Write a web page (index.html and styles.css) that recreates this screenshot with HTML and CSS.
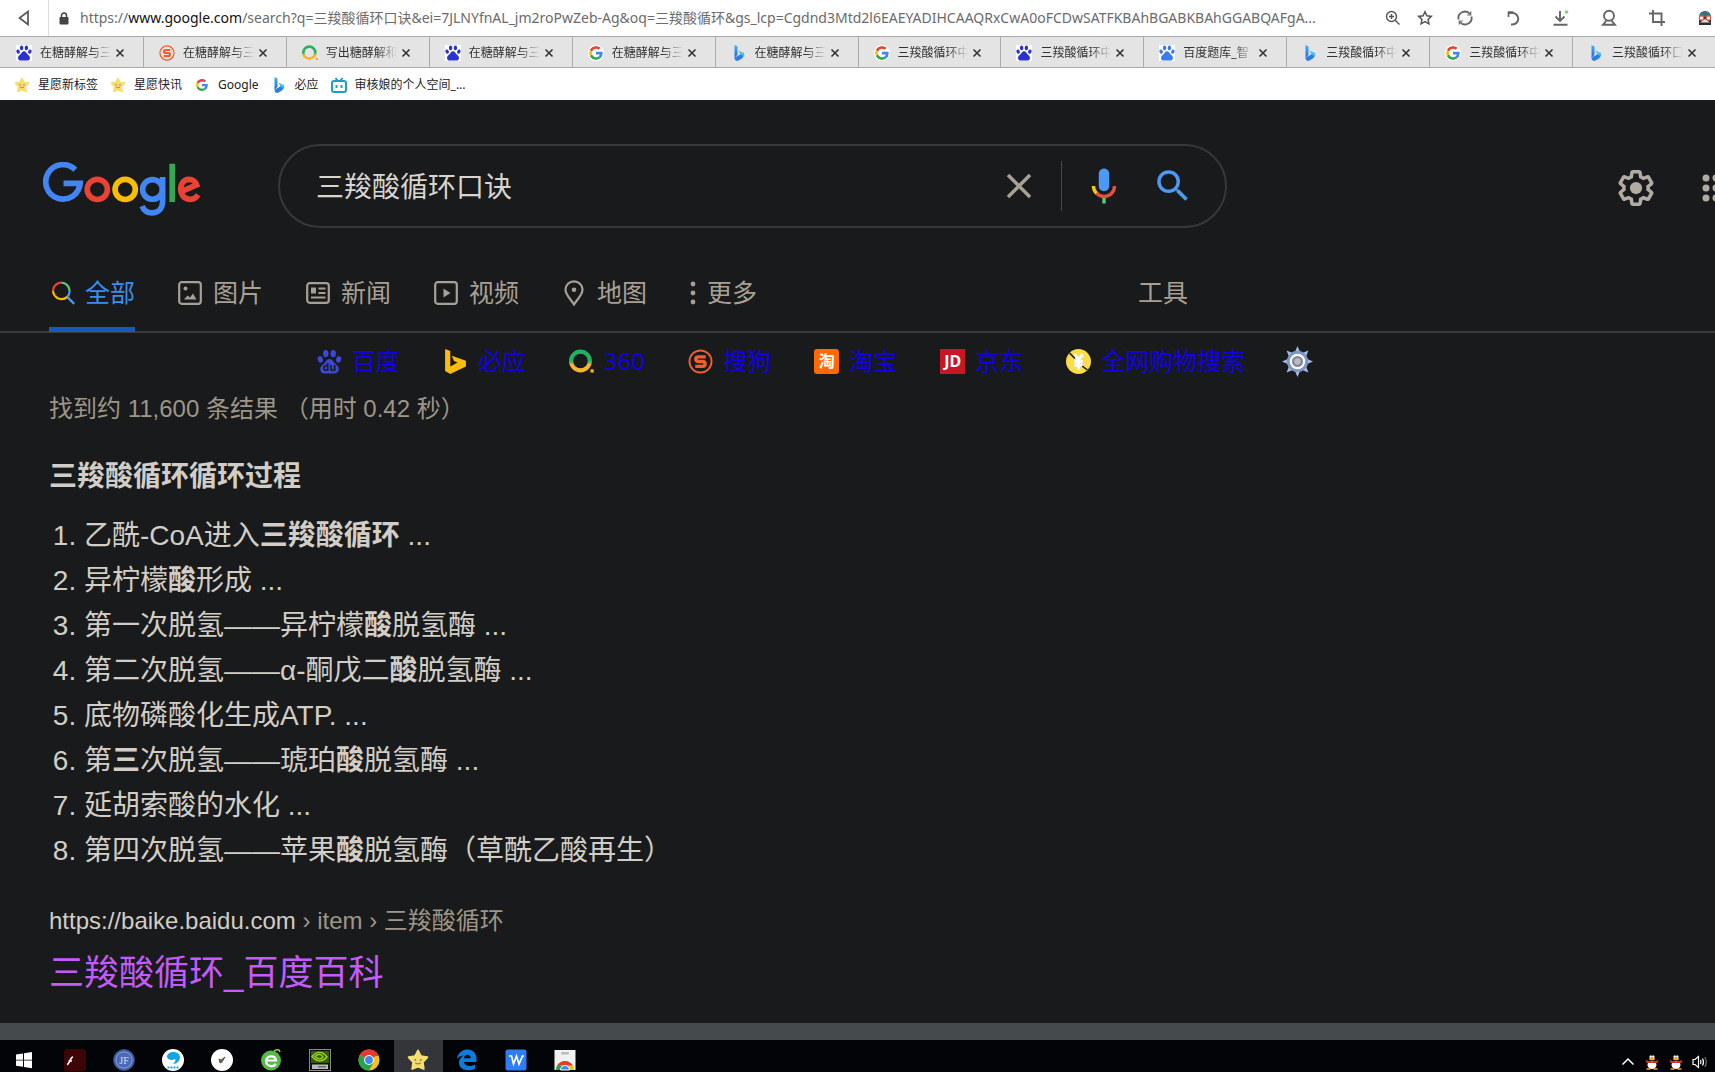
FILE: index.html
```
<!DOCTYPE html>
<html lang="zh-CN">
<head>
<meta charset="utf-8">
<title>三羧酸循环口诀 - Google 搜索</title>
<link rel="stylesheet" href="styles.css">
</head>
<body>
<svg class="sprite" aria-hidden="true">
  <defs>
    <linearGradient id="bingGrad" x1="0" y1="0" x2="0" y2="1"><stop offset="0" stop-color="#3fb4f5"/><stop offset="1" stop-color="#2467e0"/></linearGradient>
    <linearGradient id="ringGrad" x1="0" y1="0" x2="0" y2="1"><stop offset="0.5" stop-color="#23b161"/><stop offset="0.7" stop-color="#f7b52c"/></linearGradient>
  </defs>
  <symbol id="paw" viewBox="0 0 24 24">
    <ellipse cx="8.400" cy="4.400" rx="2.600" ry="3.500"/><ellipse cx="15.600" cy="4.400" rx="2.600" ry="3.500"/>
    <ellipse cx="3.200" cy="10" rx="2.500" ry="3.200" transform="rotate(-15 3.200 10)"/><ellipse cx="20.800" cy="10" rx="2.500" ry="3.200" transform="rotate(15 20.800 10)"/>
    <path d="M12 9.500c-3 0-3.600 3-5.600 4.700-2 1.600-3.400 3-3.400 5.200 0 2.500 2 4 4.300 4h9.400c2.300 0 4.300-1.500 4.300-4 0-2.200-1.400-3.600-3.400-5.200-2-1.700-2.600-4.700-5.600-4.700z"/>
  </symbol>
  <symbol id="google-g" viewBox="0 0 48 48">
    <path fill="#ea4335" d="M24 9.500c3.540 0 6.710 1.220 9.210 3.600l6.850-6.850C35.900 2.380 30.470 0 24 0 14.620 0 6.510 5.380 2.560 13.220l7.980 6.190C12.430 13.720 17.740 9.500 24 9.500z"/>
    <path fill="#4285f4" d="M46.980 24.550c0-1.570-.15-3.090-.38-4.550H24v9.020h12.940c-.58 2.960-2.260 5.480-4.780 7.180l7.730 6c4.510-4.180 7.090-10.360 7.090-17.650z"/>
    <path fill="#fbbc05" d="M10.530 28.590c-.48-1.450-.76-2.990-.76-4.590s.27-3.140.76-4.590l-7.980-6.190C.92 16.460 0 20.120 0 24c0 3.880.92 7.540 2.560 10.780l7.970-6.190z"/>
    <path fill="#34a853" d="M24 48c6.480 0 11.930-2.130 15.890-5.810l-7.730-6c-2.150 1.450-4.920 2.300-8.160 2.300-6.260 0-11.570-4.220-13.470-9.910l-7.980 6.190C6.510 42.620 14.620 48 24 48z"/>
  </symbol>
  <symbol id="bing-b" viewBox="0 0 16 16">
    <path fill="url(#bingGrad)" d="M3.500 0l3 1.500v8.300l-3 3.200z"/><path fill="#2b7de9" d="M3.500 12.800l3-1.700 6-3.500c.8 3-.2 5-2 6.200l-3 1.800c-2 1-4-.5-4-2.800z"/><path fill="#3cc3f2" d="M7.500 5.500l4 2c1.500.8 2 2.300 1.800 4L9.500 9.600z"/>
  </symbol>
  <symbol id="ring" viewBox="0 0 24 24">
    <circle cx="11" cy="11.500" r="9" fill="none" stroke="url(#ringGrad)" stroke-width="4"/><circle cx="22.200" cy="21" r="1.800" fill="#f7a52c"/>
  </symbol>
  <symbol id="star" viewBox="0 0 24 24">
    <path d="M12 1.500l3.200 6.300 7 1.200-4.900 5.200 1 7.600L12 19.200l-6.300 2.600 1-7.600L1.800 9l7-1.200z" fill="#f5df72" stroke="#f5df72" stroke-width="2" stroke-linejoin="round"/>
    <circle cx="9" cy="12" r="1.200" fill="#a98226"/><circle cx="15" cy="12" r="1.200" fill="#a98226"/><path d="M9 15q3 2.500 6 0" fill="none" stroke="#a98226" stroke-width="1.300"/>
  </symbol>
  <symbol id="sogou" viewBox="0 0 24 24">
    <circle cx="12" cy="12" r="10.600" fill="none" stroke="#f0602b" stroke-width="1.800"/>
    <path d="M17 7.500H10c-3.400 0-3.400 4.300 0 4.500h4c3.300.2 3.300 4.600 0 4.600H7" fill="none" stroke="#f0602b" stroke-width="3.200"/>
  </symbol>
  <symbol id="close" viewBox="0 0 10 10"><path d="M1.500 1.500l7 7M8.500 1.500l-7 7" fill="none" stroke="#333" stroke-width="1.600"/></symbol>
  <symbol id="penguin" viewBox="0 0 16 16">
    <ellipse cx="8" cy="11" rx="4.500" ry="4" fill="#fff"/><circle cx="8" cy="3.700" r="3.200" fill="#222"/><circle cx="6.700" cy="2.700" r="1.200" fill="#fff"/><circle cx="9.300" cy="2.700" r="1.200" fill="#fff"/><ellipse cx="8" cy="5" rx="3" ry="1.200" fill="#f5a623"/><path d="M1.500 6Q8 8.500 14.500 6L13.500 9H2.500z" fill="#d92c2c"/><path d="M2.500 15h4M9.500 15h4" stroke="#f5a623" stroke-width="1.600"/>
  </symbol>
</svg>

<header class="browser">
  <div class="address-bar">
    <button class="back" aria-label="后退"><svg width="12" height="16" viewBox="0 0 12 16"><path d="M10 1.500v13L1.500 8z" fill="none" stroke="#555" stroke-width="1.700"/></svg></button>
    <svg class="lock" width="10" height="13" viewBox="0 0 10 13"><rect x="0.500" y="5" width="9" height="7.500" rx="1" fill="#444"/><path d="M2.500 5.500V3.500a2.500 2.500 0 0 1 5 0v2" fill="none" stroke="#444" stroke-width="1.500"/></svg>
    <div class="url" role="textbox" aria-label="网址">https://<span class="host">www.google.com</span>/search?q=三羧酸循环口诀&amp;ei=7JLNYfnAL_jm2roPwZeb-Ag&amp;oq=三羧酸循环&amp;gs_lcp=Cgdnd3Mtd2l6EAEYADIHCAAQRxCwA0oFCDwSATFKBAhBGABKBAhGGABQAFgA...</div>
    <div class="bar-small">
      <button aria-label="缩放"><svg width="16" height="16" viewBox="0 0 16 16" fill="none" stroke="#555" stroke-width="1.400"><circle cx="6.500" cy="6.500" r="5"/><path d="M10.200 10.200l4.300 4.300M4 6.500h5M6.500 4v5"/></svg></button>
      <button aria-label="收藏"><svg width="16" height="16" viewBox="0 0 16 16"><path d="M8 1.800l1.900 4 4.400.6-3.200 3 .8 4.400L8 11.700l-3.900 2.100.8-4.400-3.200-3 4.400-.6z" fill="none" stroke="#555" stroke-width="1.500"/></svg></button>
    </div>
    <div class="bar-large">
      <button aria-label="刷新"><svg width="18" height="18" viewBox="0 0 18 18" fill="none" stroke="#666" stroke-width="1.900"><path d="M2.600 10.500A6.500 6.500 0 0 1 14 5M15.400 7.500A6.500 6.500 0 0 1 4 13"/><path d="M14.700 2.500v3.500h-3.500M3.300 15.500V12h3.500" stroke-width="1.200"/></svg></button>
      <button aria-label="恢复标签"><svg width="18" height="18" viewBox="0 0 18 18" fill="none" stroke="#666" stroke-width="2"><path d="M7 15.500h1.500a5.700 5.700 0 0 0 0-11.500H4"/><path d="M4.500 8V3h5" stroke-width="1.700"/></svg></button>
      <button aria-label="下载"><svg width="18" height="18" viewBox="0 0 18 18" fill="none" stroke="#666" stroke-width="1.900"><path d="M8 2v9.500M3.500 7.500L8 12l4.500-4.500M1.500 15.800h14"/><circle cx="14.500" cy="3" r="1.800" fill="#7ed957" stroke="none"/></svg></button>
      <button aria-label="账户"><svg width="18" height="18" viewBox="0 0 18 18" fill="none" stroke="#666" stroke-width="1.900"><circle cx="9" cy="6.800" r="5"/><path d="M6.500 11.500L3 15.800h12l-3.500-4.300"/></svg></button>
      <button aria-label="截图"><svg width="18" height="18" viewBox="0 0 18 18" fill="none" stroke="#666" stroke-width="1.900"><path d="M5 1v12h12M1 4.500h12.500V17"/></svg></button>
      <button aria-label="头像"><svg width="18" height="18" viewBox="0 0 18 18"><path d="M3 8C3 0 15 0 15 8z" fill="#3b7180"/><rect x="3" y="8" width="12" height="8" fill="#28303a"/><circle cx="5.500" cy="9" r="2.800" fill="#e7604d"/><circle cx="12.500" cy="9" r="2.800" fill="#e7604d"/><circle cx="5.500" cy="9" r="1.600" fill="#fff"/><circle cx="12.500" cy="9" r="1.600" fill="#fff"/><path d="M9 10l5 3.500H4z" fill="#f4d8c8"/></svg></button>
    </div>
  </div>

  <nav class="tabs" aria-label="标签页">
    <div class="tab"><svg class="favicon baidu"><use href="#paw"/></svg><a href="#">在糖酵解与三</a><button aria-label="关闭"><svg><use href="#close"/></svg></button></div>
    <div class="tab"><svg class="favicon"><use href="#sogou"/></svg><a href="#">在糖酵解与三</a><button aria-label="关闭"><svg><use href="#close"/></svg></button></div>
    <div class="tab"><svg class="favicon"><use href="#ring"/></svg><a href="#">写出糖酵解和</a><button aria-label="关闭"><svg><use href="#close"/></svg></button></div>
    <div class="tab"><svg class="favicon baidu"><use href="#paw"/></svg><a href="#">在糖酵解与三</a><button aria-label="关闭"><svg><use href="#close"/></svg></button></div>
    <div class="tab"><svg class="favicon round"><use href="#google-g"/></svg><a href="#">在糖酵解与三</a><button aria-label="关闭"><svg><use href="#close"/></svg></button></div>
    <div class="tab"><svg class="favicon"><use href="#bing-b"/></svg><a href="#">在糖酵解与三</a><button aria-label="关闭"><svg><use href="#close"/></svg></button></div>
    <div class="tab"><svg class="favicon round"><use href="#google-g"/></svg><a href="#">三羧酸循环中</a><button aria-label="关闭"><svg><use href="#close"/></svg></button></div>
    <div class="tab"><svg class="favicon baidu"><use href="#paw"/></svg><a href="#">三羧酸循环中</a><button aria-label="关闭"><svg><use href="#close"/></svg></button></div>
    <div class="tab"><svg class="favicon baidu light"><use href="#paw"/></svg><a href="#">百度题库_智</a><button aria-label="关闭"><svg><use href="#close"/></svg></button></div>
    <div class="tab"><svg class="favicon"><use href="#bing-b"/></svg><a href="#">三羧酸循环中</a><button aria-label="关闭"><svg><use href="#close"/></svg></button></div>
    <div class="tab"><svg class="favicon round"><use href="#google-g"/></svg><a href="#">三羧酸循环中</a><button aria-label="关闭"><svg><use href="#close"/></svg></button></div>
    <div class="tab"><svg class="favicon"><use href="#bing-b"/></svg><a href="#">三羧酸循环口</a><button aria-label="关闭"><svg><use href="#close"/></svg></button></div>
  </nav>

  <nav class="bookmarks" aria-label="书签">
    <a href="#"><svg><use href="#star"/></svg>星愿新标签</a>
    <a href="#"><svg><use href="#star"/></svg>星愿快讯</a>
    <a href="#"><svg class="small"><use href="#google-g"/></svg>Google</a>
    <a href="#"><svg><use href="#bing-b"/></svg>必应</a>
    <a href="#"><svg viewBox="0 0 16 16" fill="none" stroke="#1c9fc9" stroke-width="2"><rect x="1" y="4" width="14" height="11" rx="2"/><path d="M4.500 1l2 2.500M11.500 1l-2 2.500M5.500 8v3M10.500 8v3"/></svg>审核娘的个人空间_...</a>
  </nav>
</header>

<main class="page">
  <header class="search-header">
    <a class="logo" href="#" aria-label="Google">
      <svg width="158" height="54" viewBox="0 0 272 93" fill="none" stroke-width="9.800">
        <path stroke="#4285f4" d="M55.500 13.300A29.700 29.700 0 1 0 64 36.700H35.300"/>
        <circle stroke="#ea4335" cx="93.500" cy="47.200" r="17.400"/>
        <circle stroke="#fbbc05" cx="141.500" cy="47.200" r="17.400"/>
        <path stroke="#4285f4" d="M206 26v41c0 13-8 20.500-18.500 20.500-8 0-14-4.500-17-11.500"/>
        <circle stroke="#4285f4" cx="188.500" cy="47.200" r="17"/>
        <path stroke="#34a853" d="M222.500 3v66"/>
        <path stroke="#ea4335" d="M267 56.500C260 67.500 244 67 238.500 54 234 41 241 30 251 30c7 0 12 4.500 13.500 9.500L238 51"/>
      </svg>
    </a>
    <form class="search-box" onsubmit="return false">
      <input type="text" aria-label="搜索" value="三羧酸循环口诀">
      <button type="reset" class="clear" aria-label="清除"><svg width="42" height="42" viewBox="0 0 24 24"><path fill="#a8a095" d="M19 6.410L17.590 5 12 10.590 6.410 5 5 6.410 10.590 12 5 17.590 6.410 19 12 13.410 17.590 19 19 17.590 13.410 12z"/></svg></button>
      <button type="button" class="mic" aria-label="语音搜索"><svg width="42" height="42" viewBox="0 0 24 24"><path fill="#4c9af5" d="m12 15c1.660 0 3-1.310 3-2.970v-7.020c0-1.660-1.340-3.010-3-3.010s-3 1.340-3 3.010v7.020c0 1.660 1.340 2.970 3 2.970z"/><path fill="#5bc57a" d="m11 18.080h2v3.920h-2z"/><path fill="#fbc21c" d="m7.050 16.870c-1.270-1.330-2.050-2.830-2.050-4.870h2c0 1.450 0.560 2.420 1.470 3.380v0.320l-1.150 1.180z"/><path fill="#e5503c" d="m12 16.930a4.970 5.250 0 0 1 -3.540 -1.550l-1.410 1.490c1.260 1.340 3.020 2.130 4.950 2.130 3.870 0 6.990-2.920 6.990-7h-1.990c0 2.920-2.240 4.930-5 4.930z"/></svg></button>
      <button type="submit" class="go" aria-label="搜索"><svg width="42" height="42" viewBox="0 0 24 24"><path fill="#4c9af5" d="M15.500 14h-.79l-.28-.27A6.471 6.471 0 0 0 16 9.500 6.500 6.500 0 1 0 9.500 16c1.610 0 3.090-.59 4.230-1.570l.27.28v.79l5 4.990L20.490 19l-4.990-5zm-6 0C7.010 14 5 11.990 5 9.500S7.010 5 9.500 5 14 7.010 14 9.500 11.990 14 9.500 14z"/></svg></button>
    </form>
    <div class="header-tools">
      <button aria-label="设置"><svg width="42" height="42" viewBox="0 0 24 24" fill="#b2aba1"><path d="M13.850 22.250h-3.700c-.74 0-1.360-.54-1.450-1.270l-.27-1.890c-.27-.14-.53-.29-.79-.46l-1.800.72c-.7.26-1.470-.03-1.810-.65L2.200 15.530c-.35-.66-.2-1.440.36-1.880l1.530-1.190c-.01-.15-.02-.3-.02-.46 0-.15.01-.31.02-.46l-1.520-1.190c-.59-.45-.74-1.260-.37-1.880l1.850-3.190c.34-.62 1.110-.9 1.790-.63l1.810.73c.26-.17.52-.32.78-.46l.27-1.910c.09-.7.71-1.250 1.440-1.250h3.700c.74 0 1.360.54 1.450 1.270l.27 1.890c.27.14.53.29.79.46l1.800-.72c.71-.26 1.480.03 1.820.65l1.840 3.180c.36.66.2 1.440-.36 1.880l-1.520 1.190c.01.15.02.3.02.46s-.01.31-.02.46l1.520 1.190c.56.45.72 1.230.37 1.860l-1.860 3.220c-.34.62-1.110.9-1.800.63l-1.800-.72c-.26.17-.52.32-.78.46l-.27 1.910c-.1.68-.72 1.220-1.460 1.220zm-3.230-2h2.760l.37-2.550.53-.22c.44-.18.88-.44 1.340-.78l.45-.34 2.380.96 1.380-2.400-2.030-1.580.07-.56c.03-.26.06-.51.06-.78s-.03-.53-.06-.78l-.07-.56 2.030-1.580-1.390-2.400-2.390.96-.45-.35c-.42-.32-.87-.58-1.330-.77l-.52-.22-.37-2.550h-2.760l-.37 2.550-.53.21c-.44.19-.88.44-1.340.79l-.45.33-2.380-.95-1.390 2.390 2.030 1.580-.07.56a7 7 0 0 0-.06.79c0 .26.02.53.06.78l.07.56-2.030 1.580 1.380 2.400 2.390-.96.45.35c.43.33.86.58 1.330.77l.53.22.38 2.550z"/><circle cx="12" cy="12" r="3.500"/></svg></button>
      <button aria-label="Google 应用"><svg width="13" height="28" viewBox="0 0 13 28" fill="#b2aba1"><circle cx="4" cy="4" r="3.500"/><circle cx="4" cy="14" r="3.500"/><circle cx="4" cy="24" r="3.500"/><circle cx="14" cy="4" r="3.500"/><circle cx="14" cy="14" r="3.500"/><circle cx="14" cy="24" r="3.500"/></svg></button>
    </div>
  </header>

  <nav class="filters">
    <a class="active" href="#"><svg viewBox="0 0 24 24" fill="none" stroke-width="2.200"><path stroke="#fbbc05" d="M4 15A8.300 8.300 0 0 1 2 10"/><path stroke="#ea4335" d="M2 10A8.300 8.300 0 0 1 10.300 1.700"/><path stroke="#5bc57a" d="M10.300 1.700a8.300 8.300 0 0 1 8.300 8.300"/><path stroke="#4c9af5" d="M18.600 10a8.300 8.300 0 0 1-2.400 5.900M16.200 15.900l7 7"/><path stroke="#fbbc05" d="M16.200 15.900A8.300 8.300 0 0 1 4 15"/></svg>全部</a>
    <a href="#"><svg viewBox="0 0 24 24" fill="none" stroke="currentColor" stroke-width="2.200"><rect x="1.200" y="1.200" width="21.600" height="21.600" rx="2.500"/><circle cx="7.500" cy="7.500" r="2" fill="currentColor" stroke="none"/><path d="M6 18.500l3.500-4 2.500 2 3-4 3.500 6z" fill="currentColor" stroke="none"/></svg>图片</a>
    <a href="#"><svg viewBox="0 0 24 24" fill="none" stroke="currentColor" stroke-width="2.200"><rect x="1.200" y="2.200" width="21.600" height="19.600" rx="2.500"/><path d="M5 6.500h5v6H5z" fill="currentColor" stroke="none"/><path d="M12.500 7.500h7M12.500 12h7M5 16.500h14.500" stroke-width="2"/></svg>新闻</a>
    <a href="#"><svg viewBox="0 0 24 24" fill="none" stroke="currentColor" stroke-width="2.200"><rect x="1.200" y="1.200" width="21.600" height="21.600" rx="2.500"/><path d="M9.500 7.500l7 4.500-7 4.500z" fill="currentColor" stroke="none"/></svg>视频</a>
    <a href="#"><svg class="pin" viewBox="0 0 24 26" fill="none" stroke="currentColor" stroke-width="2.200"><path d="M12 24.500c-3-5-8.500-9.500-8.500-14.700a8.500 8.500 0 0 1 17 0C20.500 15 15 19.500 12 24.500z"/><circle cx="12" cy="9.800" r="2.300" fill="currentColor" stroke="none"/></svg>地图</a>
    <button class="more"><svg class="dots" viewBox="0 0 4 20" fill="currentColor"><circle cx="2" cy="2.500" r="2"/><circle cx="2" cy="10" r="2"/><circle cx="2" cy="17.500" r="2"/></svg>更多</button>
    <button class="tools">工具</button>
  </nav>

  <nav class="engines">
    <a href="#"><svg class="paw" viewBox="0 0 24 24"><use href="#paw"/><text x="12" y="21" text-anchor="middle">du</text></svg>百度</a>
    <a href="#"><svg viewBox="0 0 24 24"><path d="M2 0l5 1.800v15L14 13l-3.500-1.600L8.500 6.500 22 11.200v5.500L7 24l-5-3z" fill="#fbbc12"/></svg>必应</a>
    <a href="#"><svg><use href="#ring"/></svg>360</a>
    <a href="#"><svg><use href="#sogou"/></svg>搜狗</a>
    <a href="#"><span class="badge taobao">淘</span>淘宝</a>
    <a href="#"><span class="badge jd">JD</span>京东</a>
    <a href="#"><svg viewBox="0 0 24 24"><circle cx="12" cy="12" r="12" fill="#fbdc4a"/><path d="M8 5l4 5.500L16 5M8 12h8M8 15.500h8M12 10.500V20" fill="none" stroke="#fff" stroke-width="3"/><path d="M3.500 4L8.500 9M15.500 16.500l5 3.500" stroke="#222" stroke-width="1.500"/></svg>全网购物搜索</a>
    <button aria-label="设置"><svg class="cog" viewBox="0 0 32 32"><path d="M16 0l3 7h-6zM16 32l3-7h-6zM0 16l7-3v6zM32 16l-7-3v6zM4.700 4.700l7 2.800-4.200 4.200zM27.300 4.700l-7 2.800 4.200 4.200zM4.700 27.300l7-2.800-4.200-4.200zM27.300 27.300l-7-2.800 4.200-4.200z" fill="#a9bbdd"/><circle cx="16" cy="16" r="9.500" fill="#fff" stroke="#7d97c9" stroke-width="3"/><circle cx="16" cy="16" r="4.500" fill="#b9bcc8" stroke="#878696" stroke-width="2.500"/></svg></button>
  </nav>

  <section class="results">
    <p class="stats">找到约 11,600 条结果 （用时 0.42 秒）</p>
    <h2>三羧酸循环循环过程</h2>
    <ol>
      <li>乙酰-CoA进入<b>三羧酸循环</b> ...</li>
      <li>异柠檬<b>酸</b>形成 ...</li>
      <li>第一次脱氢——异柠檬<b>酸</b>脱氢酶 ...</li>
      <li>第二次脱氢——α-酮戊二<b>酸</b>脱氢酶 ...</li>
      <li>底物磷酸化生成ATP. ...</li>
      <li>第<b>三</b>次脱氢——琥珀<b>酸</b>脱氢酶 ...</li>
      <li>延胡索酸的水化 ...</li>
      <li>第四次脱氢——苹果<b>酸</b>脱氢酶（草酰乙酸再生）</li>
    </ol>
    <a class="result" href="#">
      <cite>https://baike.baidu.com<span> › item › 三羧酸循环</span></cite>
      <h3>三羧酸循环_百度百科</h3>
    </a>
  </section>
</main>
<div class="scrollbar"></div>

<footer class="taskbar">
  <div class="apps">
    <button class="start" aria-label="开始"><svg viewBox="0 0 22 22" fill="#fff"><path d="M3 5.500l7-1v6.200H3zM11 4.300l8-1.200v7.600h-8zM3 11.600h7v6.200l-7-1zM11 11.600h8v7.600L11 18z"/></svg></button>
    <button aria-label="Flash"><svg viewBox="0 0 22 22"><rect width="22" height="22" rx="3" fill="#3d0507"/><path d="M9 8c-3 0-3 7-6 7.500M4.500 12h3.500" fill="none" stroke="#fff" stroke-width="1.600"/></svg></button>
    <button aria-label="JF"><svg viewBox="0 0 22 22"><circle cx="11" cy="11" r="10.500" fill="#4a68b4" stroke="#33497c"/><circle cx="11" cy="11" r="8" fill="none" stroke="#8fa6dd" stroke-width="0.800"/><text class="jf" x="11" y="14.500" text-anchor="middle">JF</text></svg></button>
    <button aria-label="迅雷"><svg viewBox="0 0 22 22"><circle cx="11" cy="11" r="11" fill="#fff"/><path d="M5 8c0-6 12-7 13 0 0 4-3 7-7 7 2-2 3-4 2-5-3 2-7 1-8-2z" fill="#13a5e8"/><path d="M5.500 18.500h11" stroke="#13a5e8" stroke-width="2" stroke-dasharray="2 1"/></svg></button>
    <button aria-label="画板"><svg viewBox="0 0 22 22"><circle cx="11" cy="11" r="11" fill="#fff"/><path d="M8 10l2 1 4-3-3 5-2 1z" fill="#7a6a45" stroke="#444" stroke-width="0.800"/></svg></button>
    <button aria-label="浏览器"><svg viewBox="0 0 22 22"><circle cx="11" cy="11.500" r="10" fill="#57b947"/><path d="M16 15c-3 4-10 2-10-3s9-7 10-.500H6.500" fill="none" stroke="#fff" stroke-width="2.200"/><path d="M14 2q5-3 6 1" fill="none" stroke="#8ed43c" stroke-width="1.500"/></svg></button>
    <button aria-label="NVIDIA"><svg viewBox="0 0 22 22"><rect x="0.500" y="0.500" width="21" height="21" fill="#111" stroke="#8b8b8b"/><rect x="2" y="2" width="18" height="12" fill="#355a08"/><path d="M3 7.500Q11-1 18 8 11 16 3 7.500zM6 7.500Q11 3 14 8 11 12 6 7.500z" fill="none" stroke="#9ed62a" stroke-width="1.400"/><rect x="3" y="15.500" width="16" height="4.500" fill="#bbb"/><path d="M9 17.800h8" stroke="#444"/></svg></button>
    <button aria-label="Chrome"><svg viewBox="0 0 22 22"><circle cx="11" cy="11" r="10.500" fill="#fbc116"/><path d="M11 11L1.900 5.750A10.500 10.500 0 0 1 20.100 5.750z" fill="#e33b2e"/><path d="M11 11L1.900 5.750A10.500 10.500 0 0 0 11 21.500L15.500 13.600z" fill="#2ba24c"/><path d="M11 6.500h9.500" stroke="#e33b2e"/><circle cx="11" cy="11" r="4.900" fill="#fff"/><circle cx="11" cy="11" r="3.900" fill="#4285f4"/></svg></button>
    <button class="current" aria-label="星愿浏览器"><svg><use href="#star"/></svg></button>
    <button aria-label="Edge"><svg viewBox="0 0 22 22"><path d="M1 10C2 3 7 .500 11.500.500c6 0 9 4.500 9 9V13H8c.5 4.500 7 5 11 2.500v4.200C12 23 3 21 3 13.500c0-3 2-5.500 5-7C4.500 6.800 2.500 8 1 10zM8 9.300h6.800C14.800 4.500 8.500 4.500 8 9.300z" fill="#0f7bdb" fill-rule="evenodd"/></svg></button>
    <button aria-label="WPS"><svg viewBox="0 0 22 22"><rect x="0.500" y="0.500" width="21" height="21" rx="2" fill="#2f7df2"/><path d="M4 7h2.500l2 8 3-8 2.500 8 3.500-8h1.500" fill="none" stroke="#fff" stroke-width="1.700"/></svg></button>
    <button aria-label="应用商店"><svg viewBox="0 0 22 22"><rect x="0.500" y="1" width="21" height="20" fill="#f1f1f1"/><rect x="7" y="3" width="8" height="2.500" rx="1" fill="#bbb"/><path d="M2 21a9 9 0 0 1 18 0z" fill="#fbc116"/><path d="M2 21a9 9 0 0 1 2.600-6.300L11 21z" fill="#2ba24c"/><path d="M3.200 16.500a9 9 0 0 1 15.600 0z" fill="#e33b2e"/><path d="M6.500 21a4.500 4.500 0 0 1 9 0z" fill="#4285f4" stroke="#fff"/></svg></button>
  </div>
  <div class="tray">
    <button aria-label="显示隐藏的图标"><svg viewBox="0 0 16 16"><path d="M2.500 10.500L8 5l5.500 5.500" fill="none" stroke="#fff" stroke-width="1.500"/></svg></button>
    <button aria-label="QQ"><svg><use href="#penguin"/></svg></button>
    <button aria-label="QQ"><svg><use href="#penguin"/></svg></button>
    <button aria-label="音量"><svg viewBox="0 0 16 16" fill="none" stroke="#fff" stroke-width="1.200"><path d="M1 5.500h2L6.500 2.500v11L3 10.500H1zM8.500 6q1 2 0 4M10.500 4.500q2 3.500 0 7"/><path d="M12.800 3q3 5 0 10" stroke="#777"/></svg></button>
  </div>
</footer>
</body>
</html>
```
FILE: styles.css
```
* { box-sizing: border-box; }

body {
  margin: 0;
  min-height: 100vh;
  display: flex;
  flex-direction: column;
  background: #181a1b;
  font-family: "Liberation Sans", "Noto Sans CJK SC", sans-serif;
  overflow-x: hidden;
}

a { color: inherit; text-decoration: none; }
button { margin: 0; padding: 0; border: 0; background: none; color: inherit; font: inherit; }
svg { display: block; flex: none; }
.sprite { position: absolute; width: 0; height: 0; }

/* Browser chrome */
.browser {
  background: #fff;
  font-family: "Noto Sans", "Noto Sans CJK SC", sans-serif;
}
.address-bar { display: flex; align-items: center; height: 36px; }
.back {
  width: 49px;
  height: 36px;
  display: grid;
  place-items: center;
  border-right: 1px solid #ddd;
}
.lock { margin: 0 11px 0 10px; }
.url {
  flex: 1;
  min-width: 0;
  white-space: nowrap;
  font-size: 14px;
  line-height: 24px;
  color: #6b6b6b;
}
.host { color: #111; }
.bar-small { display: flex; gap: 16px; margin-left: 16px; }
.bar-large { display: flex; gap: 30px; margin: 0 1px 0 23px; }

.tabs {
  display: grid;
  grid-template-columns: repeat(12, minmax(0, 1fr));
  height: 32px;
  border: solid #ababab;
  border-width: 1px 0;
  background: #e4e4e4;
}
.tab {
  display: flex;
  align-items: center;
  padding: 2px 18px 0 15px;
  border-left: 1px solid #ababab;
  font-size: 12px;
  line-height: 20px;
  color: #333;
}
.tab:first-child { border-left-color: transparent; }
.tab a {
  flex: 1;
  margin: 0 1px 0 8px;
  white-space: nowrap;
  mask-image: linear-gradient(to right, #000 68%, transparent 96%);
}
.tab button svg { width: 10px; height: 10px; }
.favicon { width: 16px; height: 16px; }
.favicon.baidu { background: #fff; fill: #2a33d0; }
.favicon.light { fill: #3a7cf0; }
.favicon.round { padding: 1px; border-radius: 8px; background: #fff; }

.bookmarks {
  display: flex;
  align-items: center;
  gap: 12px;
  height: 32px;
  padding: 2px 0 0 14px;
  font-size: 12px;
  line-height: 20px;
  color: #222;
}
.bookmarks a { display: flex; align-items: center; gap: 8px; }
.bookmarks svg { width: 16px; height: 16px; }
.bookmarks .small { padding: 2px; }

/* Search page */
.page { flex: 1; color: #d1cdc7; overflow: hidden; }
.search-header { display: flex; align-items: center; padding-top: 44px; }
.logo { margin: 6px 77px 0 43px; }
.search-box {
  display: flex;
  align-items: center;
  flex: 0 1 949px;
  height: 84px;
  padding: 0 31px 0 36px;
  border: 2px solid #36393b;
  border-radius: 42px;
}
.search-box input {
  flex: 1;
  min-width: 0;
  padding: 4px 0 0;
  border: 0;
  outline: 0;
  background: none;
  color: #d8d4cf;
  font: inherit;
  font-size: 28px;
  line-height: 40px;
}
.clear { padding-right: 21px; }
.mic { padding: 4px 0 4px 21px; border-left: 1px solid #45494b; }
.go { margin-left: 27px; }
.header-tools { display: flex; align-items: center; gap: 45px; margin: 4px 0 0 auto; }

.filters {
  display: flex;
  gap: 43px;
  height: 105px;
  padding: 35px 0 0 49px;
  border-bottom: 2px solid #393c3e;
  font-size: 25px;
  line-height: 60px;
  color: #a8a095;
}
.filters a, .more { display: flex; align-items: center; gap: 11px; height: 60px; }
.filters svg { width: 24px; height: 24px; }
.filters .active { gap: 10px; height: 69px; padding: 0 0 4px 2px; border-bottom: 5px solid #185abc; color: #3b8eed; }
.filters .pin { height: 26px; }
.filters .dots { width: 6px; height: 24px; }
.tools { margin-left: 338px; height: 60px; }

.engines {
  display: flex;
  align-items: center;
  gap: 43px;
  height: 56px;
  padding-left: 317px;
  color: #1200e8;
  font-family: "Noto Sans", "Noto Sans CJK SC", sans-serif;
  font-size: 24px;
  line-height: 40px;
}
.engines a { display: flex; align-items: center; gap: 10px; }
.engines svg { width: 25px; height: 25px; }
.engines .cog { width: 31px; height: 31px; margin-left: -6px; }
.paw { fill: #3b48d8; }
.paw text { fill: #181a1b; font-size: 10px; font-weight: bold; }
.badge {
  width: 25px;
  height: 25px;
  text-align: center;
  font-size: 16px;
  font-weight: bold;
  line-height: 25px;
  color: #fff;
}
.taobao { border-radius: 3px; background: #ff6a00; }
.jd { background: #c81623; }

.results { padding: 0 49px; font-size: 28px; line-height: 45px; }
.stats { margin: 0; font-size: 24px; line-height: 40px; color: #9e9689; }
.results h2 { margin: 25px 0 0; font-size: 28px; line-height: 45px; }
.results ol { margin: 14px 0 0; padding-left: 35px; }
.result { display: block; margin-top: 28px; }
.result cite { display: block; font-style: normal; font-size: 24px; line-height: 40px; }
.result cite span { color: #9e9689; }
.result h3 { margin: 8px 0 26px; font-size: 35px; font-weight: normal; line-height: 48px; color: #c35cfa; }

.scrollbar { height: 17px; background: #454a4d; }

/* Taskbar */
.taskbar { display: flex; justify-content: space-between; height: 32px; background: #020407; overflow: hidden; }
.apps { display: flex; }
.apps button { width: 49px; height: 32px; padding: 8px 14px 0 13px; }
.apps .start { width: 51px; padding-right: 16px; }
.apps .current { background: #333538; }
.apps svg { width: 22px; height: 22px; }
.jf { fill: #d5e0ff; font-family: "Liberation Serif", serif; font-size: 10px; }
.tray { display: flex; gap: 8px; padding: 12px 7px 0 0; }
.tray svg { width: 16px; height: 16px; }
```
